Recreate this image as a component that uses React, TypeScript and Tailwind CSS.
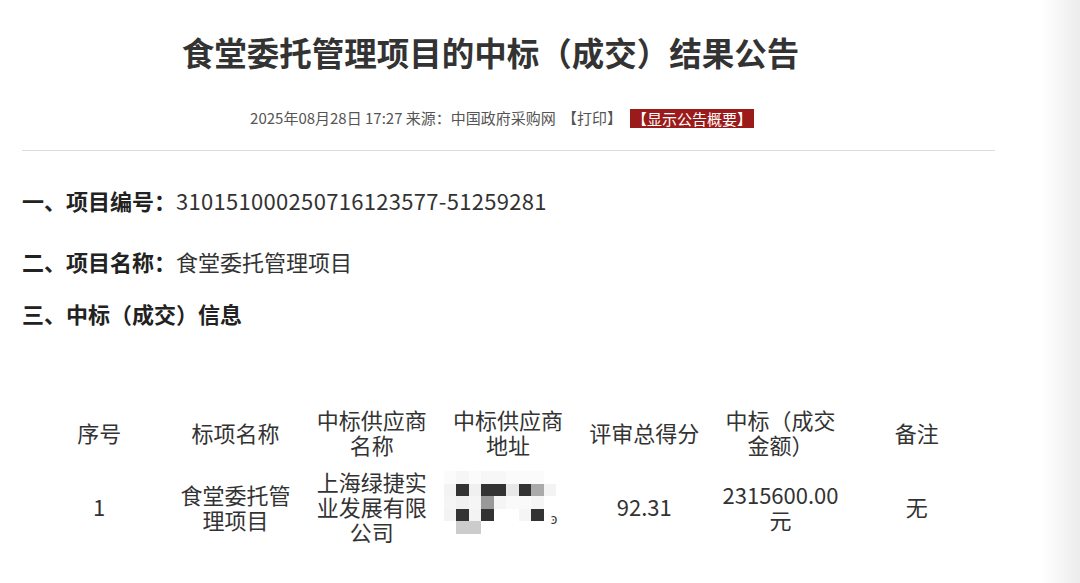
import React from "react";

const mosaic: string[][] = [
  ["bg-[#fbfbfb]", "bg-[#f6f6f6]", "bg-[#fbfbfb]", "bg-[#f7f7f7]", "bg-[#f7f7f7]", "bg-[#fbfbfb]", "bg-[#fbfbfb]", "bg-[#fbfbfb]", "bg-white"],
  ["bg-[#f3f3f3]", "bg-[#333333]", "bg-[#f0f0f0]", "bg-[#333333]", "bg-[#333333]", "bg-[#e8e8e8]", "bg-[#333333]", "bg-[#aaaaaa]", "bg-[#f3f3f3]"],
  ["bg-[#f5f5f5]", "bg-[#f0f0f0]", "bg-[#f5f5f5]", "bg-[#999999]", "bg-[#f5f5f5]", "bg-[#fafafa]", "bg-[#fafafa]", "bg-[#f5f5f5]", "bg-white"],
  ["bg-[#f3f3f3]", "bg-[#333333]", "bg-[#f3f3f3]", "bg-[#333333]", "bg-white", "bg-white", "bg-[#f5f5f5]", "bg-[#333333]", "bg-white"],
  ["bg-white", "bg-[#cccccc]", "bg-[#cccccc]", "bg-white", "bg-white", "bg-white", "bg-white", "bg-white", "bg-white"],
];

function Mosaic() {
  return (
    <div className="relative ml-[4px] mt-[2px] inline-grid grid-cols-[repeat(9,12.5px)] grid-rows-[repeat(5,12.5px)] align-top">
      {mosaic.flat().map((c, i) => (
        <div key={i} className={c} />
      ))}
      <span className="absolute left-[107px] top-[40px] text-[14px] leading-[14px] text-[#333]">ͽ</span>
    </div>
  );
}

export default function App() {
  const th = "px-[6px] py-[6px] text-center align-middle font-normal";
  const td = "px-[6px] py-[6px] text-center align-middle";
  return (
    <div
      className="h-[583px] w-full overflow-hidden bg-[linear-gradient(90deg,#ffffff_0px,#ffffff_1042px,#ececec_1080px)] text-[#333]"
      style={{ fontFamily: '"Noto Sans CJK SC", "Noto Sans", sans-serif' }}
    >
      <div className="w-[1017px] px-[22px]">
        <h1 className="mt-[30px] pr-[36px] text-center text-[32.5px] font-bold leading-[44px] text-[#333]">
          食堂委托管理项目的中标（成交）结果公告
        </h1>
        <div className="mt-[34px] flex items-center justify-center pr-[13px] text-[15px] leading-[20px] text-[#555]">
          <span>2025年08月28日 17:27 来源：中国政府采购网</span>
          <span className="ml-[6px]">【打印】</span>
          <span className="ml-[8px] bg-[#9b1b1b] px-[2px] leading-[19px] text-white">【显示公告概要】</span>
        </div>
        <div className="mt-[22px] h-px w-full bg-[#dddddd]" />

        <div className="mt-[34px] text-[22px] leading-[30px]">
          <span className="font-bold text-[#222]">一、项目编号：</span>
          <span className="tracking-[0.3px]">310151000250716123577-51259281</span>
        </div>
        <div className="mt-[31px] text-[22px] leading-[30px]">
          <span className="font-bold text-[#222]">二、项目名称：</span>
          <span>食堂委托管理项目</span>
        </div>
        <div className="mt-[22px] text-[22px] leading-[30px]">
          <span className="font-bold text-[#222]">三、中标（成交）信息</span>
        </div>

        <table className="ml-[9px] mt-[73px] w-[954px] table-fixed border-collapse text-[22px] leading-[25px]">
          <thead>
            <tr>
              <th className={th}>序号</th>
              <th className={th}>标项名称</th>
              <th className={th}>中标供应商名称</th>
              <th className={th}>中标供应商地址</th>
              <th className={th}>评审总得分</th>
              <th className={th}>中标（成交金额）</th>
              <th className={th}>备注</th>
            </tr>
          </thead>
          <tbody>
            <tr>
              <td className={td}>1</td>
              <td className={td}>食堂委托管理项目</td>
              <td className={td}>上海绿捷实业发展有限公司</td>
              <td className="px-[0px] py-[6px] text-left align-top">
                <Mosaic />
              </td>
              <td className={td}>92.31</td>
              <td className={td}>2315600.00元</td>
              <td className={td}>无</td>
            </tr>
          </tbody>
        </table>
      </div>
    </div>
  );
}
